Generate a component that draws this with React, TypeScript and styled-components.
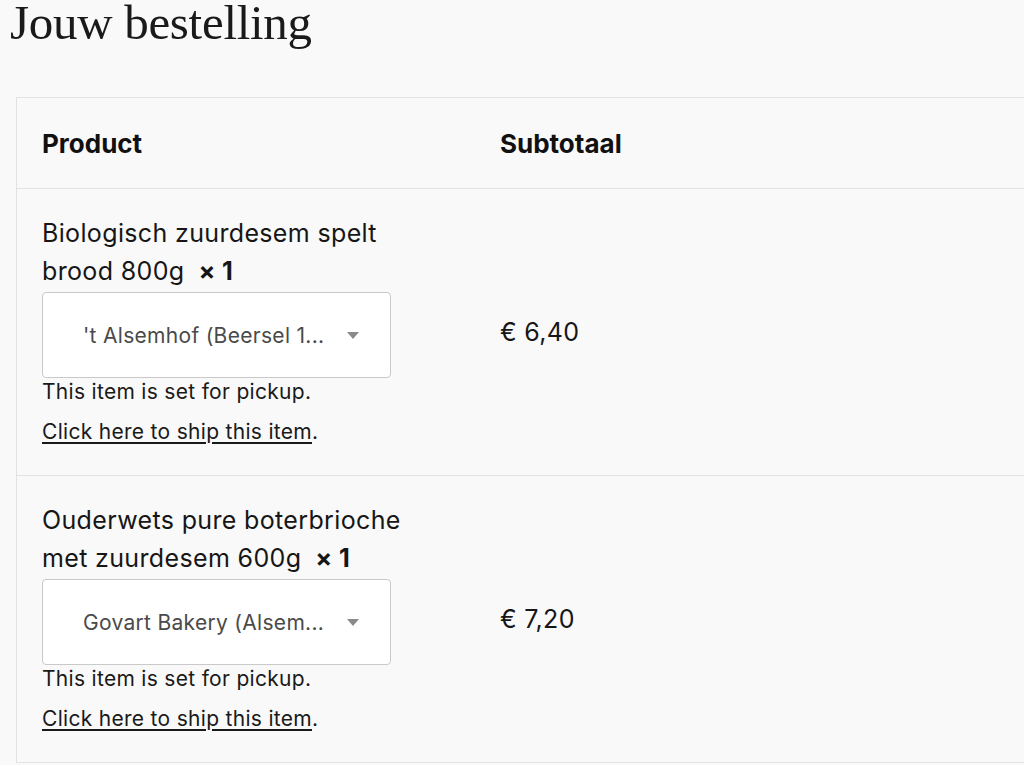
import styled, { createGlobalStyle } from "styled-components";

const GlobalStyle = createGlobalStyle`
  html, body {
    margin: 0;
    padding: 0;
    background: #f9f9f9;
    overflow: hidden;
  }
  body {
    font-family: Inter, "Noto Sans", sans-serif;
    color: #111;
  }
`;

const Page = styled.div`
  width: 1100px;
  height: 765px;
`;

const Title = styled.h1`
  margin: 0;
  padding-left: 10px;
  font-family: "Liberation Serif", "Times New Roman", serif;
  font-weight: 400;
  font-size: 49px;
  line-height: 46px;
  letter-spacing: -0.3px;
  color: #1a1a1a;
`;

const Table = styled.div`
  margin: 51px 0 0 16px;
  border-top: 1px solid #e2e2e2;
  border-left: 1px solid #e2e2e2;
  width: 1080px;
`;

const Row = styled.div<{ $head?: boolean }>`
  display: grid;
  grid-template-columns: 458px 1fr;
  align-items: center;
  border-bottom: 1px solid #e2e2e2;
  height: ${(p) => (p.$head ? "90px" : "286px")};
`;

const HeadCell = styled.div`
  padding-left: 25px;
  font-family: Inter, sans-serif;
  font-weight: 700;
  font-size: 26px;
  color: #111;
`;

const ProductCell = styled.div`
  padding: 25px 0 0 25px;
  align-self: start;
`;

const Name = styled.div`
  width: 370px;
  font-size: 25px;
  letter-spacing: 0.35px;
  line-height: 38px;
  color: #161616;
`;

const Qty = styled.strong`
  font-weight: 700;
  margin-left: 14px;
`;

const Picker = styled.div`
  box-sizing: border-box;
  width: 349px;
  height: 86px;
  margin-top: 2px;
  background: #fff;
  border: 1px solid #c9c9c9;
  border-radius: 4px;
  display: flex;
  align-items: center;
  padding: 0 31px 0 40px;
  font-size: 21px;
  letter-spacing: 0.3px;
  color: #4a4a4a;
`;

const PickerText = styled.span`
  flex: 1;
  white-space: nowrap;
  overflow: hidden;
`;

const Caret = styled.span`
  width: 0;
  height: 0;
  border-left: 6px solid transparent;
  border-right: 6px solid transparent;
  border-top: 7px solid #8a8a8a;
`;

const Note = styled.div`
  font-size: 21px;
  letter-spacing: 0.3px;
  line-height: 28px;
  color: #1a1a1a;
`;

const ShipLink = styled.div`
  margin-top: 12px;
  font-size: 21px;
  letter-spacing: 0.3px;
  line-height: 28px;
  color: #1a1a1a;

  a {
    color: inherit;
    text-decoration: underline;
    text-underline-offset: 3px;
  }
`;

const Price = styled.div`
  padding-left: 25px;
  font-size: 25px;
  letter-spacing: 0.3px;
  color: #161616;
`;

const items = [
  {
    name: "Biologisch zuurdesem spelt brood 800g",
    pickup: "'t Alsemhof (Beersel 1...",
    price: "€ 6,40",
  },
  {
    name: "Ouderwets pure boterbrioche met zuurdesem 600g",
    pickup: "Govart Bakery (Alsem...",
    price: "€ 7,20",
  },
];

export default function App() {
  return (
    <Page>
      <GlobalStyle />
      <Title>Jouw bestelling</Title>
      <Table>
        <Row $head>
          <HeadCell>Product</HeadCell>
          <HeadCell>Subtotaal</HeadCell>
        </Row>
        {items.map((it) => (
          <Row key={it.name}>
            <ProductCell>
              <Name>
                {it.name}
                <Qty>×&nbsp;1</Qty>
              </Name>
              <Picker role="combobox">
                <PickerText>{it.pickup}</PickerText>
                <Caret />
              </Picker>
              <Note>This item is set for pickup.</Note>
              <ShipLink>
                <a href="#">Click here to ship this item</a>.
              </ShipLink>
            </ProductCell>
            <Price>{it.price}</Price>
          </Row>
        ))}
      </Table>
    </Page>
  );
}
